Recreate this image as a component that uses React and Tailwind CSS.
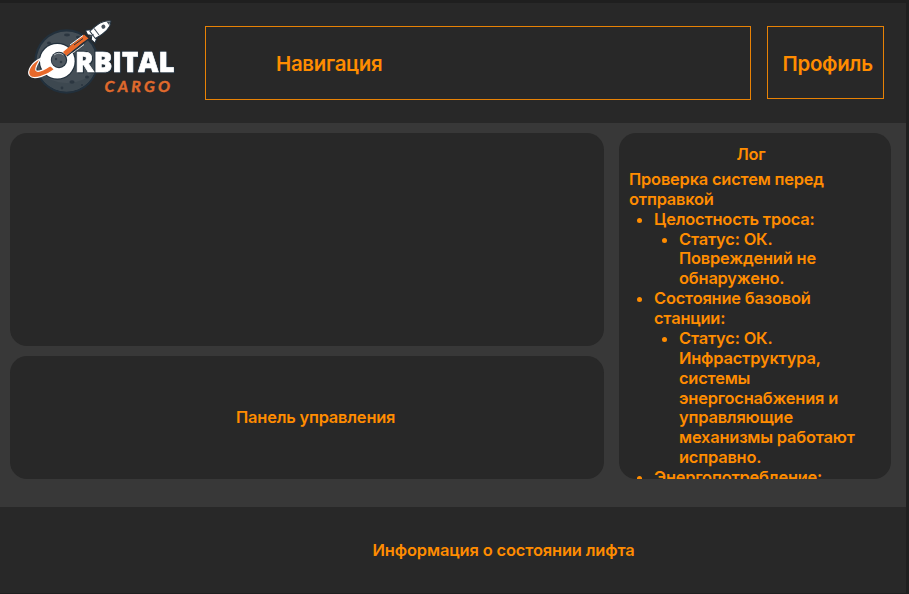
function Logo() {
  return (
    <svg width="170" height="100" viewBox="0 0 170 100" role="img" aria-label="Orbital Cargo" className="block">
      <circle cx="46.5" cy="51.5" r="32.2" fill="#22303c" />
      <circle cx="46.5" cy="51.5" r="30" fill="#454f57" />
      <path d="M17.5 59a30 30 0 0 0 58 0c-9 16-42 21-58 0z" fill="#3d4850" />
      <g fill="#2b3640">
        <ellipse cx="47" cy="25" rx="3" ry="1.4" />
        <ellipse cx="58" cy="27" rx="2" ry="1.2" />
        <ellipse cx="29" cy="33" rx="2" ry="1.5" />
        <ellipse cx="52" cy="72" rx="2.6" ry="1.8" />
        <ellipse cx="67" cy="67" rx="2" ry="1.6" />
        <circle cx="42" cy="78" r="1.4" />
        <circle cx="62" cy="75" r="1" />
      </g>
      <circle cx="37.3" cy="51.2" r="18.5" fill="#22303c" />
      <circle cx="37.3" cy="51.2" r="17.3" fill="#fff" />
      <path d="M20.5 48.5C11 53 7 61 9.500 65.500c4 5 17.500 0 25-6l-4-4c-6 4-13 7-14.500 5-1.500-3 2-7 4.500-12z" fill="#e8692a" stroke="#fff" strokeWidth="1.200" />
      <path d="M43 42L64 24.500l4.500 4L46 46z" fill="#e8692a" />
      <path d="M50 35L63 25.500" stroke="#fff" strokeWidth="1" />
      <path d="M47 46L68 29.500" stroke="#22303c" strokeWidth="1.200" />
      <path d="M50 45L64 34.500" stroke="#fff" strokeWidth=".8" />
      <path d="M54 35l9-6.500M57 38l7-6" stroke="#22303c" strokeWidth="1" />
      <circle cx="39" cy="50" r="8.200" fill="#22303c" />
      <circle cx="38.800" cy="50" r="7.200" fill="#505961" />
      <path d="M34 45q5-3.500 9.500 0" fill="none" stroke="#aab0b5" strokeWidth="1" />
      <circle cx="36" cy="49" r="1.200" fill="#303b45" />
      <circle cx="41" cy="52" r="1.300" fill="#303b45" />
      <g transform="translate(91 11) rotate(-37)">
        <path d="M-20-4l-6-4-1 5 3 3-3 3 1 5 6-4z" fill="#fff" stroke="#22303c" strokeWidth="1" />
        <path d="M0 0C-5-6-14-6-23-4.500v9C-14 6-5 6 0 0z" fill="#fff" stroke="#22303c" strokeWidth="1" />
        <path d="M-1 0l-3-2.400v4.800z" fill="#46515b" />
        <circle cx="-9.500" cy="0" r="2" fill="#46515b" />
        <path d="M-18-4v8M-22 0h-5" stroke="#46515b" strokeWidth="1" />
      </g>
      <text x="55" y="62.3" textLength="99.5" lengthAdjust="spacingAndGlyphs" fill="#fff" stroke="#fff" strokeWidth=".7" className="font-['Open_Sans','Lato',sans-serif] text-[28.5px] font-extrabold [filter:drop-shadow(1.5px_1px_0_#22303c)_drop-shadow(-1px_-1px_0_#22303c)]">RBITAL</text>
      <text x="84.5" y="81.5" textLength="65.5" lengthAdjust="spacing" fill="#e06a2c" stroke="#e06a2c" strokeWidth=".4" className="font-['Lato','Open_Sans',sans-serif] text-[16px] font-bold italic">CARGO</text>
    </svg>
  );
}

export default function App() {
  return (
    <div className="h-[594px] w-[909px] overflow-hidden bg-[#1f1f1f] pt-[3px] font-['Inter',sans-serif] text-[16.4px] leading-[19.86px] font-semibold tracking-[-0.18px] text-[#ff8c00]">
      <div className="flex h-[590px] w-[906px] flex-col bg-[#383838]">
        <header className="flex h-[120px] shrink-0 bg-[#282828] text-[20.4px] leading-[25px] tracking-[-0.27px]">
          <div className="mt-[7px] ml-5 h-[100px] w-[170px] shrink-0 tracking-normal">
            <Logo />
          </div>
          <nav className="mt-[23px] ml-[15px] flex h-[74px] w-[546px] items-center border border-[#e88205] pt-px pl-[70px]">
            Навигация
          </nav>
          <div className="mt-[23px] ml-4 flex h-[73px] w-[117px] items-center border border-[#e88205] pt-0.5 pl-[14.5px]">
            Профиль
          </div>
        </header>
        <main className="flex h-[384px] shrink-0 gap-[15px] pt-[10px] pl-[10px]">
          <div className="flex w-[594px] flex-col gap-[10px]">
            <section className="h-[213px] rounded-[17px] bg-[#282828]" />
            <section className="flex h-[123px] items-center rounded-[17px] bg-[#282828] pt-px pl-[226px]">
              Панель управления
            </section>
          </div>
          <aside className="h-[346px] w-[272px] overflow-hidden rounded-[17px] bg-[#282828] pt-[12.2px] pr-[25px] pl-[10px]">
            <h2 className="mb-[5px] pl-[7px] text-center">Лог</h2>
            <p>Проверка систем перед отправкой</p>
            <ul className="list-disc pl-[25px]">
              <li>
                Целостность троса:
                <ul className="list-disc pl-[25px]">
                  <li>Статус: ОК. Повреждений не обнаружено.</li>
                </ul>
              </li>
              <li>
                Состояние базовой станции:
                <ul className="list-disc pl-[25px]">
                  <li>Статус: ОК. Инфраструктура, системы энергоснабжения и управляющие механизмы работают исправно.</li>
                </ul>
              </li>
              <li>Энергопотребление:</li>
            </ul>
          </aside>
        </main>
        <footer className="flex h-[86px] shrink-0 items-center bg-[#282828] pt-px pl-[372.5px] tracking-[-0.12px]">
          Информация о состоянии лифта
        </footer>
      </div>
    </div>
  );
}
